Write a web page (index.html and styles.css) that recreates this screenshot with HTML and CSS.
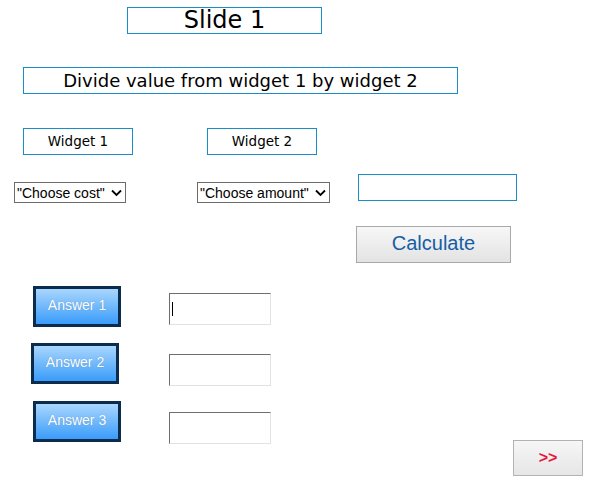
FILE: index.html
```html
<!DOCTYPE html>
<html>
<head>
<meta charset="utf-8">
<link rel="stylesheet" href="styles.css">
</head>
<body>
<div class="page">
  <div class="title">Slide 1</div>
  <div class="instr">Divide value from widget 1 by widget 2</div>
  <div class="labels">
    <div class="label l1">Widget 1</div>
    <div class="label l2">Widget 2</div>
  </div>
  <div class="controls">
    <div class="select s1"><span>"Choose cost"</span><svg width="11" height="8" viewBox="0 0 11 8"><path d="M1 1.5 L5.5 6 L10 1.5" fill="none" stroke="#000" stroke-width="1.8"/></svg></div>
    <div class="select s2"><span>"Choose amount"</span><svg width="11" height="8" viewBox="0 0 11 8"><path d="M1 1.5 L5.5 6 L10 1.5" fill="none" stroke="#000" stroke-width="1.8"/></svg></div>
    <div class="result"></div>
  </div>
  <div class="calc-row"><div class="calc">Calculate</div></div>
  <div class="answer a1">
    <div class="ans-btn">Answer 1</div>
    <div class="ans-box"><span class="caret"></span></div>
  </div>
  <div class="answer a2">
    <div class="ans-btn">Answer 2</div>
    <div class="ans-box"></div>
  </div>
  <div class="answer a3">
    <div class="ans-btn">Answer 3</div>
    <div class="ans-box"></div>
    <div class="next">&gt;&gt;</div>
  </div>
</div>
</body>
</html>
```
FILE: styles.css
```css
html, body {
  margin: 0;
  padding: 0;
  background: #fff;
}
.page {
  width: 598px;
  height: 485px;
  overflow: hidden;
  display: flex;
  flex-direction: column;
  align-items: flex-start;
  font-family: "DejaVu Sans", sans-serif;
  color: #000;
}
.title {
  box-sizing: border-box;
  margin: 7px 0 0 127px;
  width: 195px;
  height: 27px;
  border: 1px solid #1a8cc6;
  font-size: 24px;
  line-height: 25px;
  text-align: center;
}
.instr {
  box-sizing: border-box;
  margin: 33px 0 0 23px;
  width: 435px;
  height: 27px;
  border: 1px solid #1a8cc6;
  font-size: 18px;
  line-height: 25px;
  text-align: center;
}
.labels {
  display: flex;
  gap: 74px;
  margin: 34px 0 0 23px;
}
.label {
  box-sizing: border-box;
  width: 110px;
  height: 27px;
  border: 1px solid #1a8cc6;
  font-size: 13.5px;
  line-height: 25px;
  text-align: center;
}
.controls {
  display: flex;
  align-items: flex-start;
  margin: 19px 0 0 14px;
}
.select {
  box-sizing: border-box;
  margin-top: 8px;
  height: 21px;
  border: 1px solid #6b6b6b;
  display: flex;
  align-items: center;
  justify-content: space-between;
  padding: 0 3px 0 2px;
  font-family: "Liberation Sans", Arial, sans-serif;
  font-size: 14px;
}
.select svg { display: block; }
.s1 { width: 112px; }
.s2 { width: 133px; margin-left: 71px; }
.result {
  box-sizing: border-box;
  margin-left: 28px;
  width: 159px;
  height: 27px;
  border: 1px solid #1a8cc6;
}
.calc-row {
  margin: 23px 0 0 356px;
}
.calc {
  box-sizing: border-box;
  width: 155px;
  height: 37px;
  border: 1px solid #a9a9a9;
  background: linear-gradient(#f7f7f7, #e3e3e3);
  color: #155ea6;
  font-family: "Liberation Sans", Arial, sans-serif;
  font-size: 20px;
  line-height: 32px;
  text-align: center;
}
.answer {
  display: flex;
  align-items: flex-start;
  align-self: stretch;
}
.ans-btn {
  box-sizing: border-box;
  width: 88px;
  height: 41px;
  border: 3px solid #0c2c4e;
  background: linear-gradient(#a9d6fd, #3a9cfa);
  color: #fff;
  font-family: "Liberation Sans", Arial, sans-serif;
  font-size: 14px;
  line-height: 32px;
  text-align: center;
  text-shadow: 0 0 1px rgba(0,0,0,0.25);
}
.ans-box {
  box-sizing: border-box;
  position: relative;
  width: 102px;
  height: 32px;
  border-top: 1px solid #6e6e6e;
  border-left: 1px solid #6e6e6e;
  border-right: 1px solid #e2e2e2;
  border-bottom: 1px solid #e2e2e2;
  background: #fff;
}
.caret {
  position: absolute;
  left: 2px;
  top: 8px;
  width: 1px;
  height: 14px;
  background: #000;
}
.a1 { margin-top: 23px; padding-left: 33px; }
.a1 .ans-box { margin: 7px 0 0 48px; }
.a2 { margin-top: 16px; padding-left: 31px; }
.a2 .ans-box { margin: 11px 0 0 50px; }
.a3 { margin-top: 15px; padding-left: 33px; }
.a3 .ans-box { margin: 11px 0 0 48px; }
.next {
  box-sizing: border-box;
  margin: 39px 0 0 242px;
  width: 70px;
  height: 36px;
  border: 1px solid #b3b3b3;
  background: linear-gradient(#f6f6f6, #e6e6e6);
  color: #e5193f;
  font-family: "Liberation Sans", Arial, sans-serif;
  font-size: 16px;
  font-weight: bold;
  line-height: 33px;
  text-align: center;
}
```
